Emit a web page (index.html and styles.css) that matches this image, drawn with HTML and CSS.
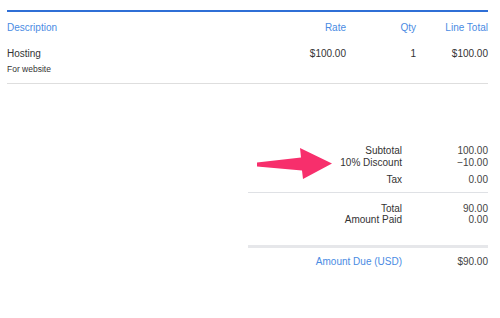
FILE: index.html
```html
<!DOCTYPE html>
<html lang="en">
<head>
    <meta charset="UTF-8">
    <title>Invoice</title>
    <link rel="stylesheet" href="styles.css">
</head>
<body>
    <div class="invoice">
        <div class="items">
            <div class="row head">
                <div class="cell">Description</div>
                <div class="cell num">Rate</div>
                <div class="cell num">Qty</div>
                <div class="cell num">Line Total</div>
            </div>
            <div class="row item">
                <div class="cell">
                    <div class="item-name">Hosting</div>
                    <div class="item-note">For website</div>
                </div>
                <div class="cell num">$100.00</div>
                <div class="cell num">1</div>
                <div class="cell num">$100.00</div>
            </div>
        </div>

        <div class="summary">
            <svg class="arrow" width="80" height="36" viewBox="0 0 80 36">
                <polygon points="2,16.5 46,11.5 45,2 77,17.5 48,33 47,24.5 2,20.5" />
            </svg>
            <div class="group first">
                <div class="line"><span class="label">Subtotal</span><span class="value">100.00</span></div>
                <div class="line"><span class="label">10% Discount</span><span class="value">&minus;10.00</span></div>
                <div class="line tax"><span class="label">Tax</span><span class="value">0.00</span></div>
            </div>
            <div class="group second">
                <div class="line"><span class="label">Total</span><span class="value">90.00</span></div>
                <div class="line"><span class="label">Amount Paid</span><span class="value">0.00</span></div>
            </div>
            <div class="group due">
                <div class="line"><span class="label">Amount Due (USD)</span><span class="value">$90.00</span></div>
            </div>
        </div>
    </div>
</body>
</html>
```

FILE: styles.css
```css
body {
    margin: 0;
    font-family: 'Liberation Sans', Arial, sans-serif;
    background-color: white;
    color: #333;
}
.invoice {
    padding: 10px 12px 0 7px;
}
.items {
    border-top: 2px solid #2f6fd6;
}
.row {
    display: grid;
    grid-template-columns: 1fr 80px 70px 72px;
}
.num {
    text-align: right;
}
.head {
    font-size: 10px;
    line-height: 12px;
    color: #4a8be3;
    padding-top: 10px;
}
.item {
    font-size: 10px;
    line-height: 12px;
    padding-top: 14px;
    padding-bottom: 8px;
    border-bottom: 1px solid #dedede;
}
.item-note {
    font-size: 8.5px;
    line-height: 11px;
    margin-top: 4px;
}
.summary {
    position: relative;
    margin-left: 241px;
    margin-top: 61px;
    font-size: 10px;
}
.arrow {
    position: absolute;
    left: 7px;
    top: 1px;
}
.arrow polygon {
    fill: #f72f6c;
}
.line {
    display: flex;
    line-height: 12px;
}
.label {
    flex: 1;
    text-align: right;
}
.value {
    width: 86px;
    text-align: right;
    color: #444;
}
.group.first {
    padding-bottom: 6px;
    border-bottom: 1px solid #dfe1e5;
}
.line.tax {
    margin-top: 4.5px;
}
.group.second {
    padding-top: 10px;
    padding-bottom: 19px;
    border-bottom: 3px solid #e6e7ea;
}
.group.second .line {
    line-height: 11.5px;
}
.group.due {
    padding-top: 8px;
}
.group.due .label {
    color: #4a8be3;
}
```
